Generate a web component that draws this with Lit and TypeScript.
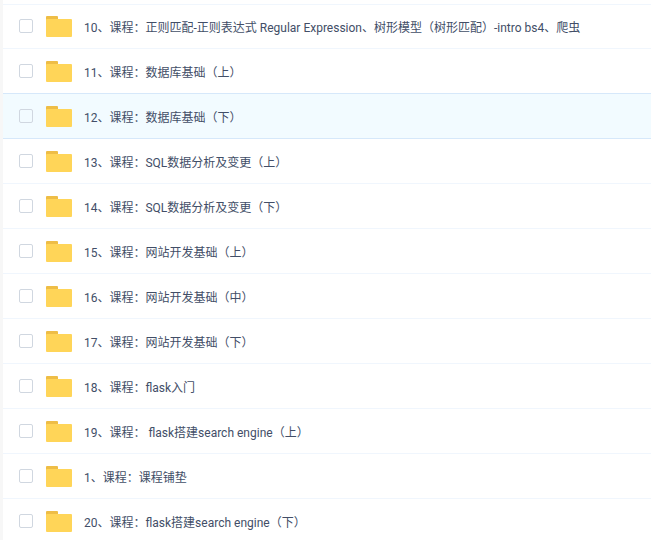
import { LitElement, html, css } from "lit";
import { customElement, property, state } from "lit/decorators.js";
import { classMap } from "lit/directives/class-map.js";

const FOLDERS = [
  "10、课程：正则匹配-正则表达式 Regular Expression、树形模型（树形匹配）-intro bs4、爬虫",
  "11、课程：数据库基础（上）",
  "12、课程：数据库基础（下）",
  "13、课程：SQL数据分析及变更（上）",
  "14、课程：SQL数据分析及变更（下）",
  "15、课程：网站开发基础（上）",
  "16、课程：网站开发基础（中）",
  "17、课程：网站开发基础（下）",
  "18、课程：flask入门",
  "19、课程： flask搭建search engine（上）",
  "1、课程：课程铺垫",
  "20、课程：flask搭建search engine（下）",
];

@customElement("folder-row")
export class FolderRow extends LitElement {
  @property() name = "";

  static styles = css`
    :host {
      display: flex;
      align-items: center;
      height: 44px;
      padding-left: 16px;
      border-bottom: 1px solid #f0f6fd;
    }
    .check {
      appearance: none;
      flex: none;
      box-sizing: border-box;
      width: 14px;
      height: 14px;
      margin: 0 13px 0 0;
      border: 1px solid #d0d7e0;
      border-radius: 2px;
      background: transparent;
    }
    .check:checked {
      background: #3b8cff;
    }
    .icon {
      flex: none;
      display: block;
      width: 26px;
      height: 21px;
      margin-right: 12px;
    }
    .name {
      color: #424e67;
      text-decoration: none;
      white-space: nowrap;
      line-height: 20px;
      padding-top: 4px;
    }
  `;

  render() {
    return html`
      <input class="check" type="checkbox" aria-label=${this.name} />
      <svg class="icon" viewBox="0 0 26 21" aria-hidden="true">
        <path d="M0 5V1a1 1 0 0 1 1-1h10a1 1 0 0 1 1 1v4z" fill="#eebd46" />
        <rect y="3" width="26" height="18" rx="1" fill="#ffd558" />
      </svg>
      <a class="name" href="#">${this.name}</a>
    `;
  }
}

@customElement("app-root")
export class AppRoot extends LitElement {
  @state() private active = 2;

  static styles = css`
    :host {
      display: block;
      box-sizing: border-box;
      height: 100vh;
      overflow: hidden;
      border-left: 3px solid #f7f7f7;
      background: #fff;
      font: 12px Roboto, "Noto Sans CJK SC", sans-serif;
    }
    .list {
      list-style: none;
      margin: 0;
      padding: 0;
    }
    .list::before {
      content: "";
      display: block;
      height: 4px;
      margin-bottom: -1px;
      border-bottom: 1px solid #f0f6fd;
    }
    .active {
      background: #f2fbff;
      border-color: #d6e8fa;
      box-shadow: 0 -1px #d6e8fa;
    }
  `;

  render() {
    return html`
      <ul class="list">
        ${FOLDERS.map(
          (name, i) => html`<li>
            <folder-row
              class=${classMap({ active: i === this.active })}
              .name=${name}
              @mouseenter=${() => (this.active = i)}
            ></folder-row>
          </li>`,
        )}
      </ul>
    `;
  }
}
